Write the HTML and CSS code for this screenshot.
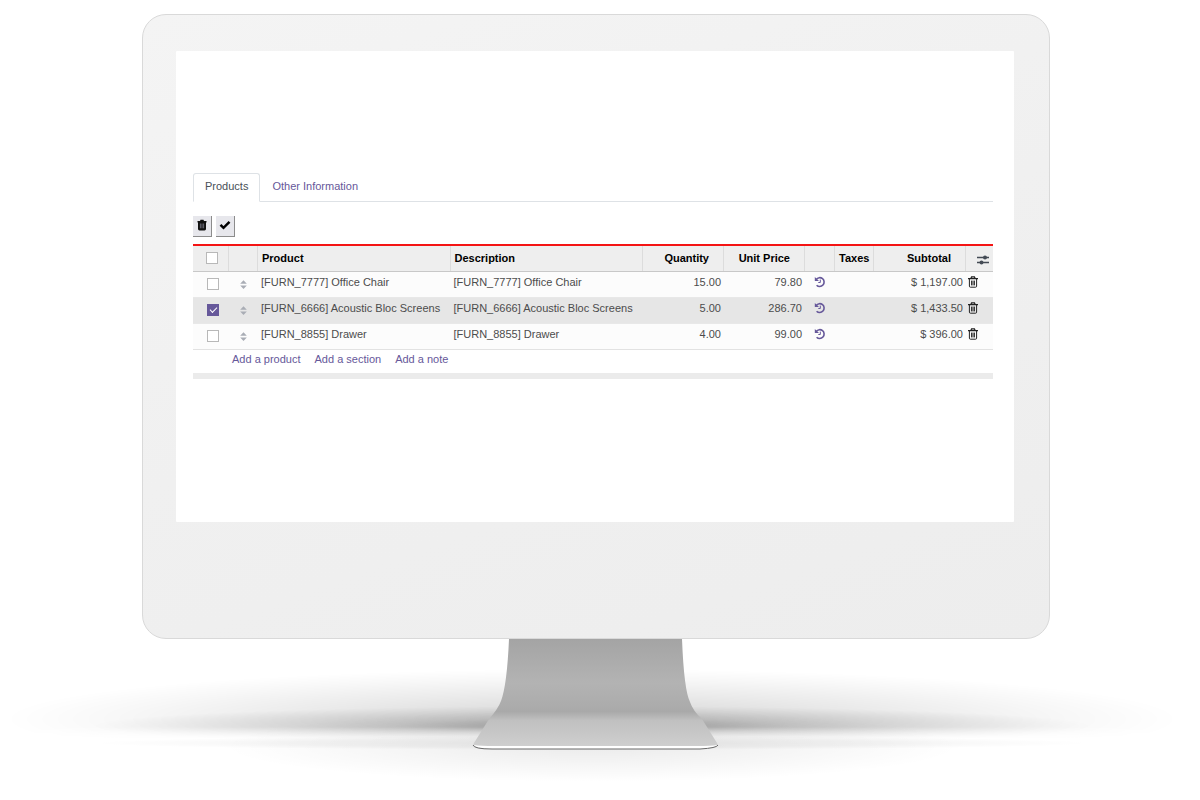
FILE: index.html
```html
<!DOCTYPE html>
<html lang="en">
<head>
<meta charset="utf-8">
<title>Order lines</title>
<link rel="stylesheet" href="styles.css">
</head>
<body>
<svg class="symbols" aria-hidden="true">
  <symbol id="trash" viewBox="0 0 12 12"><path d="M1 2.6h10M4 2.2l.6-1.4h2.8L8 2.2" fill="none" stroke="currentColor" stroke-width="1.3"/><path d="M2.4 3v7.2q0 1 1 1h5.2q1 0 1-1V3M4.6 4.6v4.8M6 4.6v4.8M7.4 4.6v4.8" fill="none" stroke="currentColor" stroke-width="1"/></symbol>
  <symbol id="history" viewBox="0 0 12 12"><path d="M2.2 3.4A4.4 4.4 0 1 1 2.6 9.2" fill="none" stroke="currentColor" stroke-width="1.6"/><path d="M.8.9v4.2h4.2z" fill="currentColor"/><path d="M6.300 3.600v2.900H4.300" fill="none" stroke="currentColor" stroke-width="1"/></symbol>
  <symbol id="sort" viewBox="0 0 8 10"><path d="M4 0l3.800 4H.2zM4 10L.2 6h7.600z" fill="currentColor"/></symbol>
</svg>
<main class="page">
  <div class="monitor">
    <section class="screen">
      <nav class="tabs">
        <a class="tab tab-active" href="#products">Products</a>
        <a class="tab" href="#other">Other Information</a>
      </nav>
      <div class="toolbar">
        <button class="tool" type="button" aria-label="Delete selected">
          <svg class="icon" viewBox="0 0 12 12"><path d="M1.500 2h2.500l.5-1.200h3L8 2h2.500v1.500h-9z" fill="#111"/><path d="M2 3h8v7q0 1.400-1.400 1.400H3.400Q2 11.400 2 10z" fill="#111"/><path d="M4.400 4.500v4.800M6 4.500v4.800M7.600 4.500v4.800" stroke="#889" stroke-width=".7"/></svg>
        </button>
        <button class="tool" type="button" aria-label="Confirm selected">
          <svg class="icon" viewBox="0 0 12 12"><path d="M1.500 5.800l3 3 6-6" fill="none" stroke="#000" stroke-width="2.500"/></svg>
        </button>
      </div>
      <table class="lines">
        <colgroup><col class="c-check"><col class="c-handle"><col><col><col class="c-number"><col class="c-number"><col class="c-history"><col class="c-taxes"><col class="c-subtotal"><col class="c-action"></colgroup>
        <thead>
          <tr>
            <th class="check"><input type="checkbox" aria-label="Select all"></th>
            <th></th><th>Product</th><th>Description</th>
            <th class="number">Quantity</th><th class="number">Unit Price</th><th></th>
            <th>Taxes</th><th class="number">Subtotal</th>
            <th class="options"><button class="plain" type="button" aria-label="Columns"><svg class="sliders" viewBox="0 0 12 12"><path d="M0 3.500h12M0 8.500h12" stroke="#444b55" stroke-width="1.300"/><circle cx="8" cy="3.500" r="2" fill="#444b55"/><circle cx="4.500" cy="8.500" r="2" fill="#444b55"/></svg></button></th>
          </tr>
        </thead>
        <tbody>
          <tr>
            <td class="check"><input type="checkbox" aria-label="Select Office Chair"></td>
            <td class="handle"><svg class="sort"><use href="#sort"/></svg></td>
            <td>[FURN_7777] Office Chair</td><td>[FURN_7777] Office Chair</td>
            <td class="number">15.00</td><td class="number">79.80</td>
            <td class="history"><button class="plain" type="button" aria-label="Price history"><svg class="icon"><use href="#history"/></svg></button></td>
            <td></td><td class="number">$ 1,197.00</td>
            <td class="action"><button class="plain" type="button" aria-label="Delete"><svg class="icon"><use href="#trash"/></svg></button></td>
          </tr>
          <tr class="selected">
            <td class="check"><input type="checkbox" checked aria-label="Select Acoustic Bloc Screens"></td>
            <td class="handle"><svg class="sort"><use href="#sort"/></svg></td>
            <td>[FURN_6666] Acoustic Bloc Screens</td><td>[FURN_6666] Acoustic Bloc Screens</td>
            <td class="number">5.00</td><td class="number">286.70</td>
            <td class="history"><button class="plain" type="button" aria-label="Price history"><svg class="icon"><use href="#history"/></svg></button></td>
            <td></td><td class="number">$ 1,433.50</td>
            <td class="action"><button class="plain" type="button" aria-label="Delete"><svg class="icon"><use href="#trash"/></svg></button></td>
          </tr>
          <tr>
            <td class="check"><input type="checkbox" aria-label="Select Drawer"></td>
            <td class="handle"><svg class="sort"><use href="#sort"/></svg></td>
            <td>[FURN_8855] Drawer</td><td>[FURN_8855] Drawer</td>
            <td class="number">4.00</td><td class="number">99.00</td>
            <td class="history"><button class="plain" type="button" aria-label="Price history"><svg class="icon"><use href="#history"/></svg></button></td>
            <td></td><td class="number">$ 396.00</td>
            <td class="action"><button class="plain" type="button" aria-label="Delete"><svg class="icon"><use href="#trash"/></svg></button></td>
          </tr>
        </tbody>
      </table>
      <div class="adders">
        <a href="#add-product">Add a product</a>
        <a href="#add-section">Add a section</a>
        <a href="#add-note">Add a note</a>
      </div>
    </section>
  </div>
  <svg class="stand" viewBox="0 0 1200 160" aria-hidden="true">
    <defs>
      <linearGradient id="metal" x1="0" y1="0" x2="0" y2="1">
        <stop offset="0" stop-color="#a4a4a4"/><stop offset=".4" stop-color="#b3b3b3"/><stop offset=".6" stop-color="#acacac"/><stop offset=".66" stop-color="#a9a9a9"/><stop offset=".74" stop-color="#c0c0c0"/><stop offset="1" stop-color="#d0d0d0"/>
      </linearGradient>
      <radialGradient id="wide"><stop offset="0" stop-color="#000" stop-opacity=".17"/><stop offset=".5" stop-color="#000" stop-opacity=".08"/><stop offset=".8" stop-color="#000" stop-opacity=".03"/><stop offset="1" stop-color="#000" stop-opacity="0"/></radialGradient>
      <radialGradient id="core"><stop offset="0" stop-color="#000" stop-opacity=".3"/><stop offset=".4" stop-color="#000" stop-opacity=".14"/><stop offset="1" stop-color="#000" stop-opacity="0"/></radialGradient>
      <radialGradient id="front"><stop offset="0" stop-color="#000" stop-opacity=".08"/><stop offset="1" stop-color="#000" stop-opacity="0"/></radialGradient>
      <radialGradient id="streak"><stop offset="0" stop-color="#000" stop-opacity=".06"/><stop offset=".6" stop-color="#000" stop-opacity=".04"/><stop offset="1" stop-color="#000" stop-opacity="0"/></radialGradient>
      <linearGradient id="fade" x1="0" y1="0" x2="0" y2="1"><stop offset="0" stop-color="#fff"/><stop offset=".88" stop-color="#fff"/><stop offset="1" stop-color="#000"/></linearGradient>
      <mask id="cut" maskUnits="userSpaceOnUse" x="0" y="0" width="1200" height="100"><rect width="1200" height="100" fill="url(#fade)"/></mask>
    </defs>
    <g mask="url(#cut)">
      <ellipse cx="592" cy="80" rx="588" ry="50" fill="url(#wide)"/>
      <ellipse cx="592" cy="87" rx="500" ry="20" fill="url(#core)"/>
    </g>
    <ellipse cx="592" cy="104" rx="500" ry="7" fill="url(#streak)"/>
    <ellipse cx="592" cy="107" rx="370" ry="36" fill="url(#front)"/>
    <path d="M509 0H682Q684 51 690 63Q693 72 702 80L717 104Q720 109 703 110H488Q471 109 474 104L489 80Q498 70 501 62Q507 46 509 0Z" fill="url(#metal)"/>
    <path d="M474 106Q480 107 495 107H697Q711 107 717 106Q717 109 703 110H488Q475 109 474 106Z" fill="#fff"/>
    <path d="M473 106Q474 110 492 110H700Q717 109 718 106" fill="none" stroke="#686868"/>
  </svg>
</main>
</body>
</html>
```
FILE: styles.css
```css
* { box-sizing: border-box; }
body {
  margin: 0;
  background: #fff;
  color: #4c4c4c;
  font: 11px/16px "Liberation Sans", Arial, sans-serif;
}
a { color: #66589a; text-decoration: none; }
.symbols { display: none; }
.page { padding-top: 14px; }
.monitor {
  margin: 0 150px 0 142px;
  padding: 36px 35px 116px 33px;
  border: 1px solid #d9d9d9;
  border-radius: 24px;
  background: linear-gradient(160deg, #f4f4f4, #f0f0f0 50%, #ededed);
}
.screen {
  min-height: 471px;
  padding: 122px 21px 0 17px;
  border-radius: 1px;
  background: #fff;
}
.tabs { display: flex; border-bottom: 1px solid #dee2e6; }
.tab { padding: 4px 11px 6px; border: 1px solid transparent; }
.tab-active {
  margin-bottom: -1px;
  border-color: #dee2e6;
  border-bottom-color: #fff;
  border-radius: 3px 3px 0 0;
  background: #fff;
  color: #495057;
}
.toolbar { display: flex; gap: 4px; padding: 14px 0 7px; }
.tool {
  display: flex;
  align-items: center;
  justify-content: center;
  height: 21px;
  padding: 0 3px 2px;
  border: 0;
  border-right: 1px solid #8c8c8c;
  border-bottom: 1px solid #8c8c8c;
  background: #e7e7ec;
}
.icon { display: block; width: 12px; height: 12px; }
.lines {
  width: 100%;
  border-top: 2px solid #f41414;
  border-collapse: separate;
  border-spacing: 0;
  table-layout: fixed;
}
.c-check { width: 36px; }
.c-handle { width: 29px; }
.c-number { width: 81px; }
.c-history { width: 30px; }
.c-taxes { width: 39px; }
.c-subtotal { width: 92px; }
.c-action { width: 27px; }
th {
  height: 25px;
  padding: 4px 3px 5px 4px;
  border-right: 1px solid #dcdcdc;
  background: #eee;
  color: #000;
  text-align: left;
  white-space: nowrap;
}
th:last-child { border-right: 0; }
td {
  height: 26px;
  padding: 2px 3px 7px;
  border-top: 1px solid #e8e8e8;
  background: #fcfcfc;
  white-space: nowrap;
}
tbody tr:first-child td { border-top-color: #c8c8c8; }
.selected td { background: #e6e6e6; }
.number { text-align: right; }
th.number { padding-right: 14px; }
.check, td.handle { padding: 0 0 1px; text-align: center; vertical-align: middle; }
.check { padding-left: 3px; }
input[type="checkbox"] {
  display: block;
  width: 12px;
  height: 12px;
  margin: 0 auto;
  border: 1px solid #b8b8b8;
  background: #fff;
  appearance: none;
}
input[type="checkbox"]:checked {
  border-color: #66589a;
  background: #66589a;
}
input[type="checkbox"]:checked::after {
  display: block;
  width: 6px;
  height: 3px;
  margin: 2px;
  border-bottom: 1px solid #fff;
  border-left: 1px solid #fff;
  content: "";
  transform: rotate(-45deg);
}
.sort { display: block; width: 7px; height: 9px; margin: 0 auto; color: #a9adb5; }
.plain { display: block; padding: 0; border: 0; background: none; color: inherit; }
.history { padding-left: 9px; color: #66589a; }
.action { padding-left: 1px; color: #222; }
.options { padding: 2px 0 0 11px; }
.sliders { display: block; width: 12px; height: 12px; }
.adders {
  display: flex;
  gap: 14px;
  padding: 1px 0 6px 39px;
  border-top: 1px solid #e2e2e2;
  border-bottom: 6px solid #ebebeb;
}
.stand { display: block; width: 100%; height: auto; }
```
